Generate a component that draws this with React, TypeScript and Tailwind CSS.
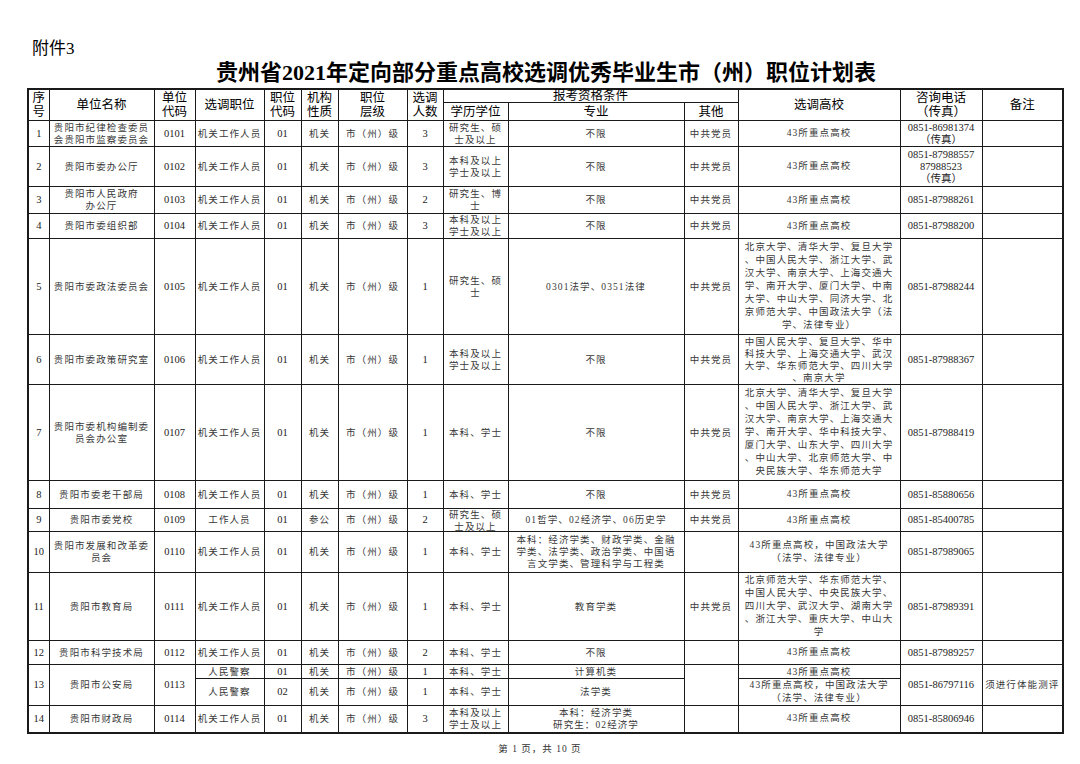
import React from 'react';

type Row = {
  no: string;
  unit: string[];
  code: string;
  pos: string;
  pcode: string;
  kind: string;
  level: string;
  count: string;
  edu: string[];
  major: string[];
  other: string;
  schools: string[];
  phone: string[];
  h: string;
  max: string;
  slh?: string;
};

const top43 = ['43所重点高校'];

const rows: Row[] = [
  { no: '1', unit: ['贵阳市纪律检查委员', '会贵阳市监察委员会'], code: '0101', pos: '机关工作人员', pcode: '01', kind: '机关', level: '市（州）级', count: '3', edu: ['研究生、硕', '士及以上'], major: ['不限'], other: '中共党员', schools: top43, phone: ['0851-86981374', '（传真）'], h: 'h-[26px]', max: 'max-h-[25px]' },
  { no: '2', unit: ['贵阳市委办公厅'], code: '0102', pos: '机关工作人员', pcode: '01', kind: '机关', level: '市（州）级', count: '3', edu: ['本科及以上', '学士及以上'], major: ['不限'], other: '中共党员', schools: top43, phone: ['0851-87988557', '87988523', '（传真）'], h: 'h-[40px]', max: 'max-h-[39px]' },
  { no: '3', unit: ['贵阳市人民政府', '办公厅'], code: '0103', pos: '机关工作人员', pcode: '01', kind: '机关', level: '市（州）级', count: '2', edu: ['研究生、博', '士'], major: ['不限'], other: '中共党员', schools: top43, phone: ['0851-87988261'], h: 'h-[27px]', max: 'max-h-[26px]' },
  { no: '4', unit: ['贵阳市委组织部'], code: '0104', pos: '机关工作人员', pcode: '01', kind: '机关', level: '市（州）级', count: '3', edu: ['本科及以上', '学士及以上'], major: ['不限'], other: '中共党员', schools: top43, phone: ['0851-87988200'], h: 'h-[25px]', max: 'max-h-[24px]' },
  { no: '5', unit: ['贵阳市委政法委员会'], code: '0105', pos: '机关工作人员', pcode: '01', kind: '机关', level: '市（州）级', count: '1', edu: ['研究生、硕', '士'], major: ['0301法学、0351法律'], other: '中共党员', schools: ['北京大学、清华大学、复旦大学', '、中国人民大学、浙江大学、武', '汉大学、南京大学、上海交通大', '学、南开大学、厦门大学、中南', '大学、中山大学、同济大学、北', '京师范大学、中国政法大学（法', '学、法律专业）'], phone: ['0851-87988244'], h: 'h-[96px]', max: 'max-h-[95px]' },
  { no: '6', unit: ['贵阳市委政策研究室'], code: '0106', pos: '机关工作人员', pcode: '01', kind: '机关', level: '市（州）级', count: '1', edu: ['本科及以上', '学士及以上'], major: ['不限'], other: '中共党员', schools: ['中国人民大学、复旦大学、华中', '科技大学、上海交通大学、武汉', '大学、华东师范大学、四川大学', '、南京大学'], phone: ['0851-87988367'], h: 'h-[50px]', max: 'max-h-[49px]', slh: 'leading-[12px]' },
  { no: '7', unit: ['贵阳市委机构编制委', '员会办公室'], code: '0107', pos: '机关工作人员', pcode: '01', kind: '机关', level: '市（州）级', count: '1', edu: ['本科、学士'], major: ['不限'], other: '中共党员', schools: ['北京大学、清华大学、复旦大学', '、中国人民大学、浙江大学、武', '汉大学、南京大学、上海交通大', '学、南开大学、华中科技大学、', '厦门大学、山东大学、四川大学', '、中山大学、北京师范大学、中', '央民族大学、华东师范大学'], phone: ['0851-87988419'], h: 'h-[96px]', max: 'max-h-[95px]' },
  { no: '8', unit: ['贵阳市委老干部局'], code: '0108', pos: '机关工作人员', pcode: '01', kind: '机关', level: '市（州）级', count: '1', edu: ['本科、学士'], major: ['不限'], other: '中共党员', schools: top43, phone: ['0851-85880656'], h: 'h-[28px]', max: 'max-h-[27px]' },
  { no: '9', unit: ['贵阳市委党校'], code: '0109', pos: '工作人员', pcode: '01', kind: '参公', level: '市（州）级', count: '2', edu: ['研究生、硕', '士及以上'], major: ['01哲学、02经济学、06历史学'], other: '中共党员', schools: top43, phone: ['0851-85400785'], h: 'h-[23px]', max: 'max-h-[22px]' },
  { no: '10', unit: ['贵阳市发展和改革委', '员会'], code: '0110', pos: '机关工作人员', pcode: '01', kind: '机关', level: '市（州）级', count: '1', edu: ['本科、学士'], major: ['本科：经济学类、财政学类、金融', '学类、法学类、政治学类、中国语', '言文学类、管理科学与工程类'], other: '', schools: ['43所重点高校，中国政法大学', '（法学、法律专业）'], phone: ['0851-87989065'], h: 'h-[41px]', max: 'max-h-[40px]' },
  { no: '11', unit: ['贵阳市教育局'], code: '0111', pos: '机关工作人员', pcode: '01', kind: '机关', level: '市（州）级', count: '1', edu: ['本科、学士'], major: ['教育学类'], other: '中共党员', schools: ['北京师范大学、华东师范大学、', '中国人民大学、中央民族大学、', '四川大学、武汉大学、湖南大学', '、浙江大学、重庆大学、中山大', '学'], phone: ['0851-87989391'], h: 'h-[68px]', max: 'max-h-[67px]' },
  { no: '12', unit: ['贵阳市科学技术局'], code: '0112', pos: '机关工作人员', pcode: '01', kind: '机关', level: '市（州）级', count: '2', edu: ['本科、学士'], major: ['不限'], other: '', schools: top43, phone: ['0851-87989257'], h: 'h-[24px]', max: 'max-h-[23px]' },
];

const last: Row = { no: '14', unit: ['贵阳市财政局'], code: '0114', pos: '机关工作人员', pcode: '01', kind: '机关', level: '市（州）级', count: '3', edu: ['本科及以上', '学士及以上'], major: ['本科：经济学类', '研究生：02经济学'], other: '', schools: top43, phone: ['0851-85806946'], h: 'h-[27px]', max: 'max-h-[26px]' };

const lines = (ls: string[]) =>
  ls.map((l, i) => (
    <React.Fragment key={i}>
      {i > 0 && <br />}
      {l}
    </React.Fragment>
  ));

function Td({
  children,
  max = '',
  num = false,
  lh = 'leading-[12px]',
  rowSpan,
}: {
  children?: React.ReactNode;
  max?: string;
  num?: boolean;
  lh?: string;
  rowSpan?: number;
}) {
  const font = num ? 'text-[10.5px] tracking-normal text-[#222]' : 'text-[9.5px] tracking-[1.1px] text-[#383838]';
  return (
    <td rowSpan={rowSpan} className="border border-[#1a1a1a] p-0 text-center align-middle">
      <div className={`overflow-hidden whitespace-nowrap ${max} ${font} ${lh}`}>{children}</div>
    </td>
  );
}

function Th({ children, rowSpan, colSpan, lh = 'leading-[14px]' }: { children: React.ReactNode; rowSpan?: number; colSpan?: number; lh?: string }) {
  return (
    <th rowSpan={rowSpan} colSpan={colSpan} className={`border border-[#1a1a1a] p-0 text-center align-middle text-[12.5px] font-normal text-black ${lh}`}>
      {children}
    </th>
  );
}

function DataRow({ r }: { r: Row }) {
  return (
    <tr className={r.h}>
      <Td num max={r.max}>{r.no}</Td>
      <Td max={r.max}>{lines(r.unit)}</Td>
      <Td num max={r.max}>{r.code}</Td>
      <Td max={r.max}>{r.pos}</Td>
      <Td num max={r.max}>{r.pcode}</Td>
      <Td max={r.max}>{r.kind}</Td>
      <Td max={r.max}>{r.level}</Td>
      <Td num max={r.max}>{r.count}</Td>
      <Td max={r.max}>{lines(r.edu)}</Td>
      <Td max={r.max}>{lines(r.major)}</Td>
      <Td max={r.max}>{r.other}</Td>
      <Td max={r.max} lh={r.slh ?? 'leading-[13px]'}>{lines(r.schools)}</Td>
      <Td num max={r.max}>{lines(r.phone)}</Td>
      <Td max={r.max} />
    </tr>
  );
}

const widths = ['w-[21px]', 'w-[105px]', 'w-[41px]', 'w-[69px]', 'w-[37px]', 'w-[37px]', 'w-[69px]', 'w-[36px]', 'w-[65px]', 'w-[176px]', 'w-[54px]', 'w-[162px]', 'w-[82px]', 'w-[81px]'];

export default function App() {
  return (
    <div className="w-[1080px] h-[764px] overflow-hidden bg-white text-black font-['Liberation_Serif','Noto_Sans_CJK_SC',serif]">
      <div className="h-[60px] pl-[32px] pt-[38px] text-[17px] leading-[22px]">附件3</div>
      <div className="h-[28px] pl-[12px] text-center text-[22px] font-bold leading-[26px]">
        贵州省2021年定向部分重点高校选调优秀毕业生市（州）职位计划表
      </div>

      <table className="ml-[27px] w-[1035px] table-fixed border-2 border-[#1a1a1a]">
        <colgroup>
          {widths.map((w, i) => (
            <col key={i} className={w} />
          ))}
        </colgroup>
        <thead>
          <tr className="h-[13px]">
            <Th rowSpan={2}>序<br />号</Th>
            <Th rowSpan={2}>单位名称</Th>
            <Th rowSpan={2}>单位<br />代码</Th>
            <Th rowSpan={2}>选调职位</Th>
            <Th rowSpan={2}>职位<br />代码</Th>
            <Th rowSpan={2}>机构<br />性质</Th>
            <Th rowSpan={2}>职位<br />层级</Th>
            <Th rowSpan={2}>选调<br />人数</Th>
            <Th colSpan={3} lh="leading-[12px]">报考资格条件</Th>
            <Th rowSpan={2}>选调高校</Th>
            <Th rowSpan={2}>咨询电话<br />（传真）</Th>
            <Th rowSpan={2}>备注</Th>
          </tr>
          <tr className="h-[18px]">
            <Th lh="leading-[16px]">学历学位</Th>
            <Th lh="leading-[16px]">专业</Th>
            <Th lh="leading-[16px]">其他</Th>
          </tr>
        </thead>
        <tbody>
          {rows.map((r) => (
            <DataRow key={r.no} r={r} />
          ))}
          {/* 13: 公安局, two positions */}
          <tr className="h-[14px]">
            <Td num rowSpan={2}>13</Td>
            <Td rowSpan={2}>贵阳市公安局</Td>
            <Td num rowSpan={2}>0113</Td>
            <Td max="max-h-[13px]">人民警察</Td>
            <Td num max="max-h-[13px]">01</Td>
            <Td max="max-h-[13px]">机关</Td>
            <Td max="max-h-[13px]">市（州）级</Td>
            <Td num max="max-h-[13px]">1</Td>
            <Td max="max-h-[13px]">本科、学士</Td>
            <Td max="max-h-[13px]">计算机类</Td>
            <Td rowSpan={2} />
            <Td max="max-h-[13px]">43所重点高校</Td>
            <Td num rowSpan={2}>0851-86797116</Td>
            <Td rowSpan={2}>须进行体能测评</Td>
          </tr>
          <tr className="h-[27px]">
            <Td max="max-h-[26px]">人民警察</Td>
            <Td num max="max-h-[26px]">02</Td>
            <Td max="max-h-[26px]">机关</Td>
            <Td max="max-h-[26px]">市（州）级</Td>
            <Td num max="max-h-[26px]">1</Td>
            <Td max="max-h-[26px]">本科、学士</Td>
            <Td max="max-h-[26px]">法学类</Td>
            <Td max="max-h-[26px]" lh="leading-[13px]">
              43所重点高校，中国政法大学
              <br />
              （法学、法律专业）
            </Td>
          </tr>
          <DataRow r={last} />
        </tbody>
      </table>

      <div className="mt-[9px] text-center text-[9.5px] leading-[12px] tracking-[1px] text-[#333]">第 1 页，共 10 页</div>
    </div>
  );
}
